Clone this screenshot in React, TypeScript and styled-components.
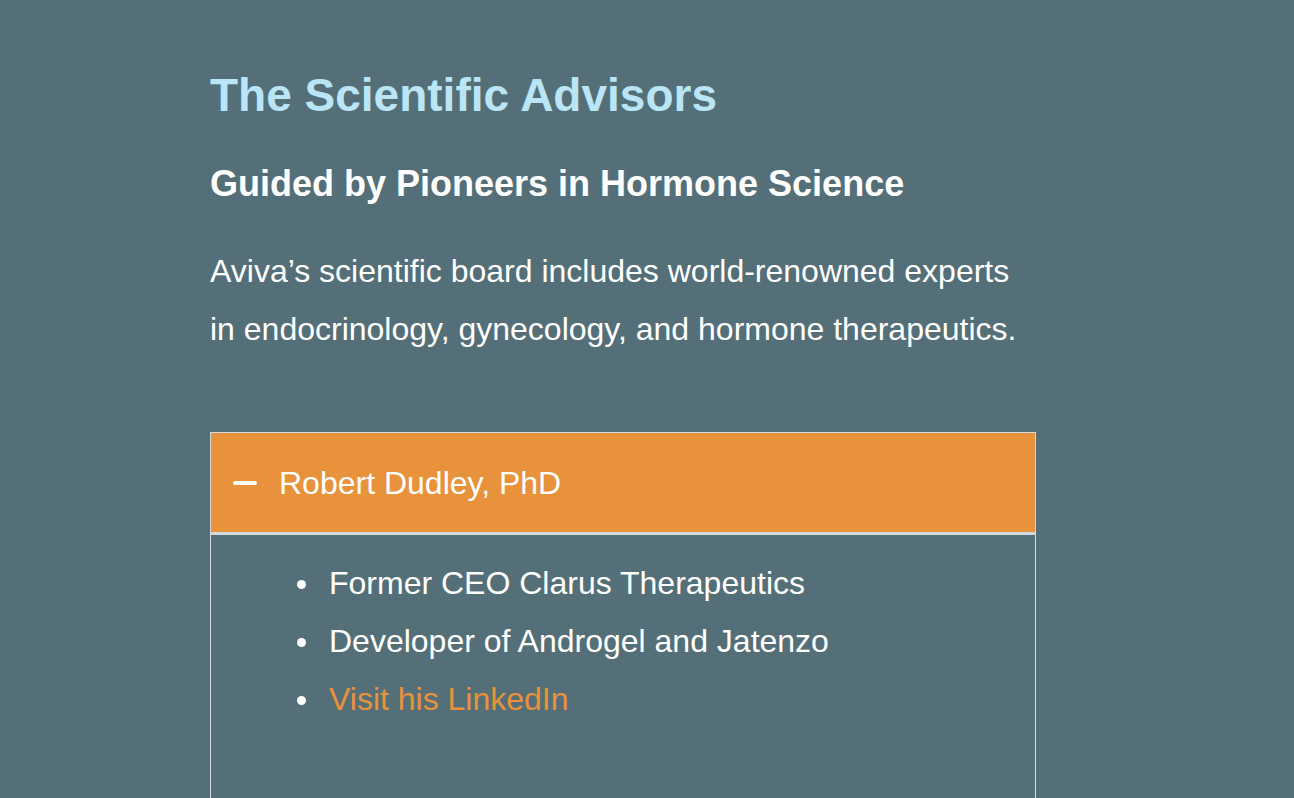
import React from "react";
import styled, { createGlobalStyle } from "styled-components";

const Global = createGlobalStyle`
  html, body { margin: 0; padding: 0; background: #546f77; }
  body { font-family: "Liberation Sans", Arial, sans-serif; color: #fff; }
`;

const Page = styled.main`
  width: 826px;
  margin-left: 210px;
  padding-top: 66px;
`;

const Title = styled.h1`
  margin: 0;
  font-size: 46px;
  line-height: 58px;
  font-weight: 700;
  color: #b9e5f6;
`;

const Subtitle = styled.h2`
  margin: 40px 0 0;
  font-size: 36px;
  line-height: 40px;
  font-weight: 700;
  color: #fff;
`;

const Lead = styled.p`
  margin: 38px 0 0;
  font-size: 32px;
  line-height: 58px;
  color: #fff;
`;

const Accordion = styled.section`
  margin-top: 74px;
  border: 1px solid #d3dadd;
  border-bottom: none;
`;

const Header = styled.button`
  display: flex;
  align-items: center;
  gap: 22px;
  width: 100%;
  height: 102px;
  padding: 0 0 0 22px;
  border: none;
  border-bottom: 3px solid #d3dadd;
  background: #e8923c;
  color: #fff;
  font: 400 32px/1 "Liberation Sans", Arial, sans-serif;
  text-align: left;
  cursor: pointer;
`;

const Minus = styled.span`
  display: block;
  width: 24px;
  height: 4px;
  border-radius: 2px;
  background: #fff;
`;

const Body = styled.div`
  height: 263px;
  box-sizing: border-box;
  padding: 19px 0 0 118px;
`;

const List = styled.ul`
  margin: 0;
  padding: 0;
  list-style: none;
`;

const Item = styled.li`
  position: relative;
  font-size: 32px;
  line-height: 58px;
  color: #fff;
  &::before {
    content: "";
    position: absolute;
    left: -32px;
    top: 26px;
    width: 9px;
    height: 9px;
    border-radius: 50%;
    background: #fff;
  }
`;

const Link = styled.a`
  color: #e8923c;
  text-decoration: none;
`;

export default function App() {
  return (
    <>
      <Global />
      <Page>
        <Title>The Scientific Advisors</Title>
        <Subtitle>Guided by Pioneers in Hormone Science</Subtitle>
        <Lead>
          Aviva’s scientific board includes world-renowned experts
          <br />
          in endocrinology, gynecology, and hormone therapeutics.
        </Lead>
        <Accordion>
          <Header>
            <Minus />
            Robert Dudley, PhD
          </Header>
          <Body>
            <List>
              <Item>Former CEO Clarus Therapeutics</Item>
              <Item>Developer of Androgel and Jatenzo</Item>
              <Item>
                <Link href="#">Visit his LinkedIn</Link>
              </Item>
            </List>
          </Body>
        </Accordion>
      </Page>
    </>
  );
}
